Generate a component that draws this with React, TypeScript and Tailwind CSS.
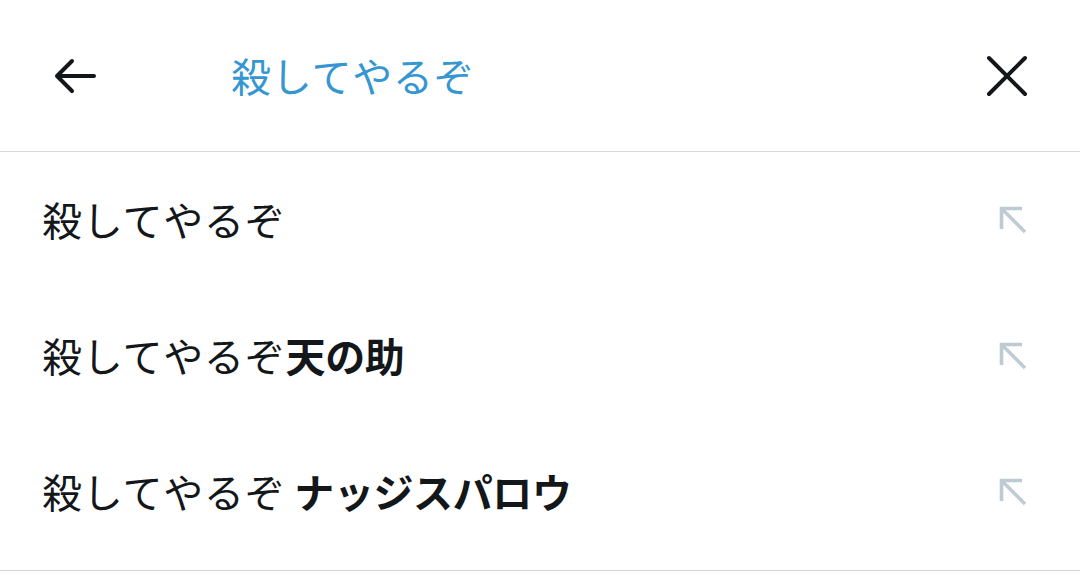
import React from 'react';

const rows: { base: string; bold: string }[] = [
  { base: '殺してやるぞ', bold: '' },
  { base: '殺してやるぞ', bold: '天の助' },
  { base: '殺してやるぞ', bold: ' ナッジスパロウ' },
];

function ArrowUpLeft() {
  return (
    <svg width="34" height="34" viewBox="0 0 34 34" fill="none" stroke="#bfcbd3" strokeWidth="3.6" strokeLinecap="butt">
      <path d="M5.5 4 L5.5 26 M4 5.5 L26 5.5 M5.5 5.5 L29 29" />
    </svg>
  );
}

export default function App() {
  return (
    <div className="w-[1080px] h-[588px] bg-white overflow-hidden" style={{ fontFamily: '"Noto Sans CJK JP", "Noto Sans", sans-serif' }}>
      <header className="h-[152px] flex items-center border-b border-[#d6dadd]">
        <div className="w-[150px] pl-[50px] flex items-center">
          <svg width="48" height="48" viewBox="0 0 48 48" fill="none" stroke="#14171a" strokeWidth="4" strokeLinecap="round" strokeLinejoin="round">
            <path d="M7 24 H44 M22 9 L7 24 L22 39" />
          </svg>
        </div>
        <div className="flex-1 pl-[81px] pb-[2px] text-[40px] leading-none text-[#3596d1] tracking-[0.8px]">殺してやるぞ</div>
        <div className="pr-[52px] flex items-center">
          <svg width="42" height="42" viewBox="0 0 42 42" fill="none" stroke="#14171a" strokeWidth="4" strokeLinecap="round">
            <path d="M3 3 L39 39 M39 3 L3 39" />
          </svg>
        </div>
      </header>
      <ul>
        {rows.map((r, i) => (
          <li key={i} className="h-[136px] flex items-center justify-between pl-[42px] pr-[50px]">
            <span className="text-[40px] leading-none text-[#14171a] tracking-[0.8px] whitespace-pre pb-[3px]">
              {r.base}
              {r.bold && <span className="font-bold tracking-[-0.4px]">{r.bold}</span>}
            </span>
            <ArrowUpLeft />
          </li>
        ))}
      </ul>
      <div className="mt-[10px] border-t border-[#d0d6d4]" />
    </div>
  );
}
